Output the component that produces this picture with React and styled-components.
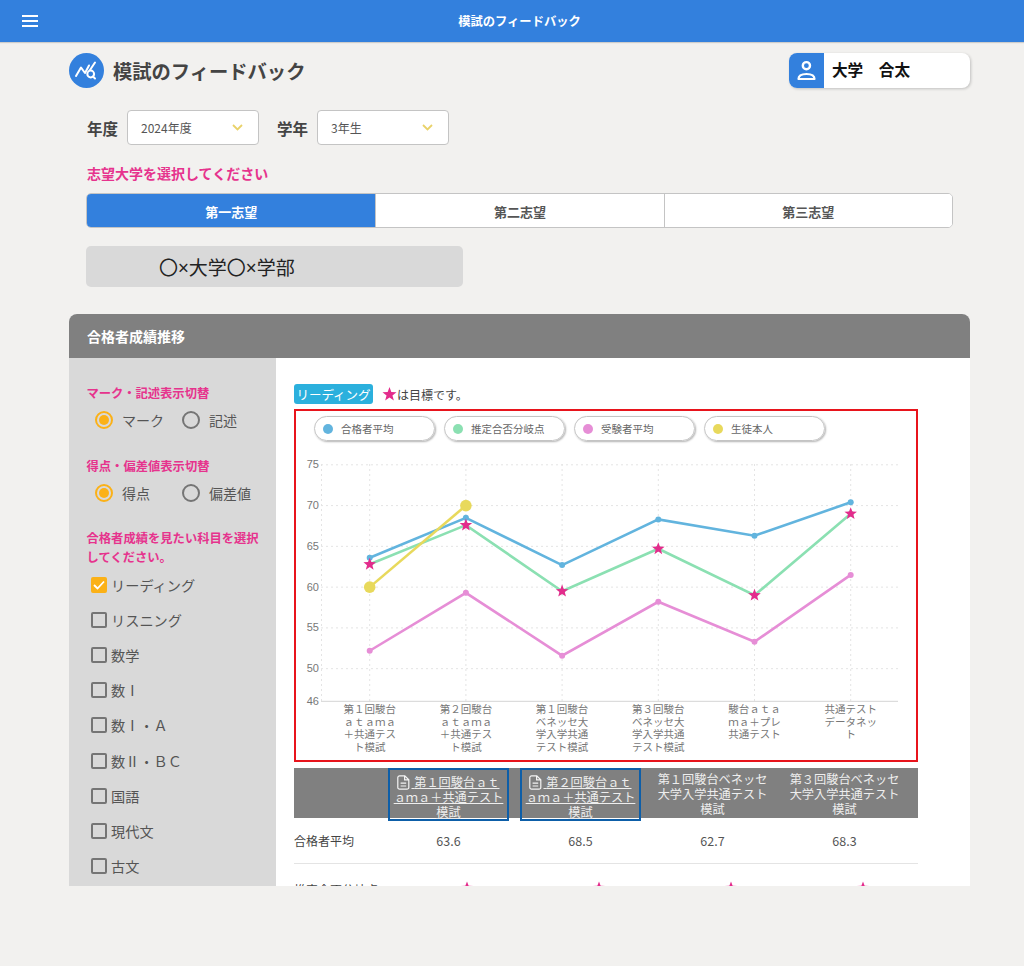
import React from 'react'
import styled, { createGlobalStyle } from 'styled-components'

const subjects = ['リスニング', '数学', '数Ⅰ', '数Ⅰ・Ａ', '数Ⅱ・ＢＣ', '国語', '現代文', '古文']

const legend = [
  { label: '合格者平均', color: '#62b4de' },
  { label: '推定合否分岐点', color: '#8be0b2' },
  { label: '受験者平均', color: '#e68ed6' },
  { label: '生徒本人', color: '#e8d95c' },
]

const blue = [63.6, 68.5, 62.7, 68.3, 66.3, 70.4]
const green = [62.8, 67.6, 59.5, 64.7, 59.0, 69.0]
const pink = [52.2, 59.3, 51.6, 58.2, 53.3, 61.5]
const student = [60, 70]

const xLabels = [
  ['第１回駿台', 'ａｔａｍａ', '＋共通テス', 'ト模試'],
  ['第２回駿台', 'ａｔａｍａ', '＋共通テス', 'ト模試'],
  ['第１回駿台', 'ベネッセ大', '学入学共通', 'テスト模試'],
  ['第３回駿台', 'ベネッセ大', '学入学共通', 'テスト模試'],
  ['駿台ａｔａ', 'ｍａ＋プレ', '共通テスト'],
  ['共通テスト', 'データネッ', 'ト'],
]

const columns = [
  { title: '第１回駿台ａｔａｍａ＋共通テスト模試', link: true, avg: '63.6', line: '62.9' },
  { title: '第２回駿台ａｔａｍａ＋共通テスト模試', link: true, avg: '68.5', line: '67.7' },
  { title: '第１回駿台ベネッセ大学入学共通テスト模試', avg: '62.7', line: '59.6' },
  { title: '第３回駿台ベネッセ大学入学共通テスト模試', avg: '68.3', line: '64.9' },
]

const px = (i) => 369.7 + i * 96.2
const py = (v) => 701.3 - (v - 46) * 8.155

const starPath = (cx, cy, r) => {
  let d = ''
  for (let i = 0; i < 10; i++) {
    const rad = i % 2 === 0 ? r : r * 0.42
    const a = (Math.PI / 5) * i - Math.PI / 2
    d += `${i === 0 ? 'M' : 'L'}${(cx + rad * Math.cos(a)).toFixed(2)} ${(cy + rad * Math.sin(a)).toFixed(2)}`
  }
  return d + 'Z'
}

const GlobalStyle = createGlobalStyle`
  html, body {
    margin: 0;
    padding: 0;
    background: #f2f1ef;
  }
  body {
    font-family: "Noto Sans CJK JP", "Noto Sans", sans-serif;
    color: #444;
  }
  * {
    box-sizing: border-box;
  }
`

const AppBar = styled.header`
  height: 42px;
  padding-left: 15px;
  background: #3380dd;
  box-shadow: 0 1px 1px rgba(0, 0, 0, 0.15);
  display: flex;
  align-items: center;
  justify-content: center;
  position: relative;
  color: #fff;
  font-size: 12.3px;
  font-weight: 700;
`

const MenuButton = styled.span`
  position: absolute;
  left: 22px;
  top: 15px;
  width: 16px;
  height: 12px;
  display: flex;
  flex-direction: column;
  justify-content: space-between;
  i {
    display: block;
    height: 2px;
    background: #fff;
  }
`

const Page = styled.main`
  height: 924px;
  padding: 11px 54px 0 69px;
`

const TopRow = styled.div`
  display: flex;
  justify-content: space-between;
  height: 35px;
`

const TitleWrap = styled.div`
  display: flex;
  align-items: center;
  gap: 9px;
`

const PageTitle = styled.h1`
  margin: 0;
  font-size: 19.3px;
  font-weight: 700;
  color: #444;
`

const Profile = styled.div`
  width: 181px;
  display: flex;
  background: #fff;
  border-radius: 8px;
  box-shadow: 1px 1px 3px rgba(0, 0, 0, 0.2);
  overflow: hidden;
`

const ProfileIcon = styled.span`
  flex: none;
  width: 35px;
  background: #3380dd;
  display: flex;
`

const ProfileName = styled.span`
  margin: -4px 0 0 8px;
  align-self: center;
  font-size: 15.6px;
  font-weight: 700;
  color: #111;
`

const Indented = styled.div`
  padding-left: 18px;
`

const SelectRow = styled.div`
  display: flex;
  align-items: center;
  margin-top: 22px;
`

const FieldLabel = styled.span`
  font-size: 15.5px;
  font-weight: 700;
  color: #444;
  margin-right: 9px;
  width: 31px;
  white-space: nowrap;
`

const Select = styled.div`
  width: 132px;
  height: 35px;
  margin-right: 18px;
  padding: 0 15px 0 13px;
  display: flex;
  align-items: center;
  justify-content: space-between;
  background: #fff;
  border: 1px solid #c4c4c4;
  border-radius: 4px;
  font-size: 12px;
  color: #555;
`

const Prompt = styled.p`
  margin: 18px 0 0;
  height: 20px;
  line-height: 20px;
  font-size: 14px;
  font-weight: 700;
  color: #e6338d;
`

const Tabs = styled.div`
  width: 867px;
  height: 35px;
  margin: 10px 0 0 -1px;
  display: grid;
  grid-template-columns: repeat(3, 1fr);
  background: #fff;
  border: 1px solid #c4c4c4;
  border-radius: 5px;
  overflow: hidden;
`

const Tab = styled.div`
  padding-top: 2px;
  display: flex;
  align-items: center;
  justify-content: center;
  font-size: 13px;
  font-weight: 700;
  color: ${(p) => (p.$active ? '#fff' : '#555')};
  background: ${(p) => (p.$active ? '#3380dd' : '#fff')};
  & + & {
    border-left: 1px solid #c4c4c4;
  }
`

const University = styled.div`
  width: 377px;
  height: 41px;
  margin: 18px 0 0 -1px;
  padding-left: 73px;
  display: flex;
  align-items: center;
  background: #d9d9d9;
  border-radius: 5px;
  font-family: "Noto Sans", "Noto Sans CJK JP", sans-serif;
  font-size: 19px;
  color: #222;
`

const Card = styled.section`
  margin-top: 27px;
  height: 572px;
  display: flex;
  flex-direction: column;
  border-radius: 8px 8px 0 0;
  overflow: hidden;
  background: #fff;
`

const CardHeader = styled.h2`
  flex: none;
  margin: 0;
  height: 44px;
  padding-left: 18px;
  display: flex;
  align-items: center;
  background: #808080;
  color: #fff;
  font-size: 14px;
  font-weight: 700;
`

const CardBody = styled.div`
  flex: 1;
  min-height: 0;
  display: flex;
`

const Sidebar = styled.aside`
  flex: none;
  width: 207px;
  padding: 26px 10px 0 17.5px;
  background: #d9d9d9;
`

const SideLabel = styled.p`
  margin: ${(p) => p.$top || 0}px 0 0;
  font-size: 12.3px;
  line-height: 19px;
  font-weight: 700;
  color: #e6338d;
`

const RadioRow = styled.div`
  display: flex;
  align-items: center;
  height: 18px;
  margin: 8px 0 0 8.5px;
`

const RadioItem = styled.label`
  display: flex;
  align-items: center;
  width: ${(p) => p.$width}px;
  gap: 9px;
  font-size: 14px;
  color: #555;
`

const Radio = styled.span`
  flex: none;
  width: 18px;
  height: 18px;
  border-radius: 50%;
  border: 2px solid ${(p) => (p.$on ? '#fbb117' : '#757575')};
  display: flex;
  align-items: center;
  justify-content: center;
  &::after {
    content: '';
    width: 10px;
    height: 10px;
    border-radius: 50%;
    background: ${(p) => (p.$on ? '#fbb117' : 'transparent')};
  }
`

const SubjectList = styled.div`
  margin: 0 0 0 4.5px;
`

const Subject = styled.label`
  height: 35.2px;
  display: flex;
  align-items: center;
  gap: 4px;
  font-size: 14.2px;
  color: #555;
`

const CheckBox = styled.span`
  flex: none;
  width: 16px;
  height: 16px;
  border-radius: 2px;
  border: 2px solid ${(p) => (p.$on ? '#fbb117' : '#757575')};
  background: ${(p) => (p.$on ? '#fbb117' : 'transparent')};
  display: flex;
  align-items: center;
  justify-content: center;
`

const Main = styled.div`
  flex: 1;
  min-width: 0;
  padding: 26px 52px 0 18px;
`

const TagRow = styled.div`
  height: 20px;
  display: flex;
  align-items: center;
  font-size: 12px;
  color: #444;
`

const Tag = styled.span`
  width: 79px;
  height: 20px;
  margin-right: 9px;
  display: flex;
  align-items: center;
  justify-content: center;
  border-radius: 3px;
  background: #2bb0dd;
  color: #fff;
  font-size: 12.5px;
`

const ChartBox = styled.div`
  height: 353px;
  margin-top: 5px;
  border: 2px solid #e8141c;
  overflow: hidden;
`

const Legend = styled.div`
  display: flex;
  gap: 9px;
  padding: 5px 0 0 18px;
`

const LegendPill = styled.div`
  width: 121px;
  height: 25px;
  padding-left: 8px;
  display: flex;
  align-items: center;
  gap: 8px;
  border: 1px solid #c4c4c4;
  border-radius: 13px;
  box-shadow: 1px 1px 2px rgba(0, 0, 0, 0.3);
  font-size: 10.5px;
  color: #666;
`

const LegendDot = styled.span`
  width: 10px;
  height: 10px;
  border-radius: 50%;
  background: ${(p) => p.$color};
`

const ChartSvg = styled.svg`
  display: block;
  margin-top: 8px;
`

const Table = styled.div`
  margin-top: 6px;
`

const TableRow = styled.div`
  display: grid;
  grid-template-columns: 88.5px repeat(4, 132px) 1fr;
  align-items: center;
  height: ${(p) => p.$height}px;
  background: ${(p) => p.$bg || 'transparent'};
  border-bottom: ${(p) => (p.$line ? '1px solid #e4e4e4' : 'none')};
`

const HeadCell = styled.div`
  margin: 0 ${(p) => (p.$link ? 5.5 : 0)}px;
  height: ${(p) => (p.$link ? 53 : 50)}px;
  padding: ${(p) => (p.$link ? '4.5px 3px 0' : '2.5px 9px 0')};
  text-align: center;
  font-size: 12.2px;
  line-height: 15px;
  color: #eee;
  border: ${(p) => (p.$link ? '2px solid #0d5ea8' : 'none')};
  text-decoration: ${(p) => (p.$link ? 'underline' : 'none')};
  svg {
    vertical-align: -3px;
    margin-right: 1px;
  }
`

const RowLabel = styled.div`
  font-size: 12px;
  color: #444;
  white-space: nowrap;
`

const ValueCell = styled.div`
  font-size: 12.5px;
  color: #555;
  text-align: center;
  position: relative;
  padding-right: ${(p) => (p.$starred ? 26 : 0)}px;
`

const TableStar = styled.svg`
  position: absolute;
  left: 77px;
  top: 1px;
`

const Hamburger = () => (
  <MenuButton>
    <i />
    <i />
    <i />
  </MenuButton>
)

const TitleIcon = () => (
  <svg width="35" height="35" viewBox="0 0 35 35">
    <circle cx="17.5" cy="17.5" r="17.5" fill="#3380dd" />
    <path
      d="M7 23l5-8.5 4 5.5 4-7.5M21 17l5-7.5"
      fill="none"
      stroke="#fff"
      strokeWidth="2"
      strokeLinecap="round"
      strokeLinejoin="round"
    />
    <circle cx="21.7" cy="21" r="3.4" fill="none" stroke="#fff" strokeWidth="2" />
    <path d="M24 23.5l2 2" stroke="#fff" strokeWidth="2" strokeLinecap="round" />
  </svg>
)

const PersonIcon = () => (
  <svg width="35" height="35" viewBox="0 0 35 35">
    <circle cx="17.4" cy="12.7" r="3.6" fill="none" stroke="#fff" strokeWidth="2.4" />
    <path
      d="M9.5 26c0-3.4 3.6-5 8-5s8 1.6 8 5z"
      fill="none"
      stroke="#fff"
      strokeWidth="2.2"
      strokeLinejoin="round"
    />
  </svg>
)

const Chevron = () => (
  <svg width="11" height="7" viewBox="0 0 11 7">
    <path d="M1 1l4.5 4.5L10 1" fill="none" stroke="#e9d26a" strokeWidth="1.8" />
  </svg>
)

const DocIcon = () => (
  <svg width="13" height="15" viewBox="0 0 13 15">
    <path
      d="M2.6.8h5.2l4 4v7.6a1.8 1.8 0 0 1-1.8 1.8H2.6A1.8 1.8 0 0 1 .8 12.4V2.6A1.8 1.8 0 0 1 2.6.8zM7.6.9v4h4.1M3.6 8.2h5.6M3.6 11h5.6"
      fill="none"
      stroke="#f4f4f4"
      strokeWidth="1.2"
    />
  </svg>
)

const Line = ({ values, color }) => (
  <g>
    <polyline
      points={values.map((v, i) => `${px(i)},${py(v)}`).join(' ')}
      fill="none"
      stroke={color}
      strokeWidth="2.6"
    />
    {values.map((v, i) => (
      <circle key={i} cx={px(i)} cy={py(v)} r="3" fill={color} />
    ))}
  </g>
)

const Chart = () => (
  <ChartSvg width="620" height="307" viewBox="296 449 620 307">
    <g stroke="#e4e4e4" strokeWidth="1" strokeDasharray="2 3">
      {[75, 70, 65, 60, 55, 50].map((v) => (
        <line key={v} x1="321" x2="898" y1={py(v)} y2={py(v)} />
      ))}
      {[0, 1, 2, 3, 4, 5].map((i) => (
        <line key={i} x1={px(i)} x2={px(i)} y1="464" y2="701" />
      ))}
      <line x1="321.5" x2="321.5" y1="464" y2="701" />
    </g>
    <line x1="321" x2="898" y1="701.3" y2="701.3" stroke="#d4d4d4" />
    <g fontFamily="Liberation Sans, sans-serif" fontSize="11" fill="#777" textAnchor="end">
      {[75, 70, 65, 60, 55, 50, 46].map((v) => (
        <text key={v} x="319" y={py(v) + 3.5}>
          {v}
        </text>
      ))}
    </g>
    <g fontSize="10.5" fill="#777" textAnchor="middle">
      {xLabels.map((lines, i) =>
        lines.map((t, j) => (
          <text key={j} x={px(i)} y={713 + j * 12.7}>
            {t}
          </text>
        ))
      )}
    </g>
    <Line values={pink} color="#e68ed6" />
    <Line values={green} color="#8be0b2" />
    <Line values={blue} color="#62b4de" />
    <polyline
      points={student.map((v, i) => `${px(i)},${py(v)}`).join(' ')}
      fill="none"
      stroke="#e8d95c"
      strokeWidth="2.6"
    />
    {student.map((v, i) => (
      <circle key={i} cx={px(i)} cy={py(v)} r="5.8" fill="#e8d95c" />
    ))}
    {green.map((v, i) => (
      <path key={i} d={starPath(px(i), py(v), 6.6)} fill="#e32c8c" />
    ))}
  </ChartSvg>
)

export default function App() {
  return (
    <>
      <GlobalStyle />
      <AppBar>
        <Hamburger />
        模試のフィードバック
      </AppBar>
      <Page>
        <TopRow>
          <TitleWrap>
            <TitleIcon />
            <PageTitle>模試のフィードバック</PageTitle>
          </TitleWrap>
          <Profile>
            <ProfileIcon>
              <PersonIcon />
            </ProfileIcon>
            <ProfileName>大学　合太</ProfileName>
          </Profile>
        </TopRow>
        <Indented>
          <SelectRow>
            <FieldLabel>年度</FieldLabel>
            <Select>
              2024年度
              <Chevron />
            </Select>
            <FieldLabel>学年</FieldLabel>
            <Select>
              3年生
              <Chevron />
            </Select>
          </SelectRow>
          <Prompt>志望大学を選択してください</Prompt>
          <Tabs>
            <Tab $active>第一志望</Tab>
            <Tab>第二志望</Tab>
            <Tab>第三志望</Tab>
          </Tabs>
          <University>〇×大学〇×学部</University>
        </Indented>
        <Card>
          <CardHeader>合格者成績推移</CardHeader>
          <CardBody>
            <Sidebar>
              <SideLabel>マーク・記述表示切替</SideLabel>
              <RadioRow>
                <RadioItem $width={87}>
                  <Radio $on />
                  マーク
                </RadioItem>
                <RadioItem $width={70}>
                  <Radio />
                  記述
                </RadioItem>
              </RadioRow>
              <SideLabel $top={28}>得点・偏差値表示切替</SideLabel>
              <RadioRow>
                <RadioItem $width={87}>
                  <Radio $on />
                  得点
                </RadioItem>
                <RadioItem $width={80}>
                  <Radio />
                  偏差値
                </RadioItem>
              </RadioRow>
              <SideLabel $top={27}>合格者成績を見たい科目を選択してください。</SideLabel>
              <SubjectList>
                <Subject>
                  <CheckBox $on>
                    <svg width="12" height="10" viewBox="0 0 12 10">
                      <path d="M1 5l3.5 3.5L11 1.5" fill="none" stroke="#fff" strokeWidth="1.8" />
                    </svg>
                  </CheckBox>
                  リーディング
                </Subject>
                {subjects.map((s) => (
                  <Subject key={s}>
                    <CheckBox />
                    {s}
                  </Subject>
                ))}
              </SubjectList>
            </Sidebar>
            <Main>
              <TagRow>
                <Tag>リーディング</Tag>
                <svg width="15" height="16" viewBox="0 0 15 16">
                  <path d={starPath(7.5, 8.5, 7.4)} fill="#e32c8c" />
                </svg>
                は目標です。
              </TagRow>
              <ChartBox>
                <Legend>
                  {legend.map((l) => (
                    <LegendPill key={l.label}>
                      <LegendDot $color={l.color} />
                      {l.label}
                    </LegendPill>
                  ))}
                </Legend>
                <Chart />
              </ChartBox>
              <Table>
                <TableRow $height={50} $bg="#808080">
                  <div />
                  {columns.map((c) => (
                    <HeadCell key={c.title} $link={c.link}>
                      {c.link && (
                        <>
                          <DocIcon />{' '}
                        </>
                      )}
                      {c.title}
                    </HeadCell>
                  ))}
                </TableRow>
                <TableRow $height={46} $line>
                  <RowLabel>合格者平均</RowLabel>
                  {columns.map((c) => (
                    <ValueCell key={c.title}>{c.avg}</ValueCell>
                  ))}
                </TableRow>
                <TableRow $height={50}>
                  <RowLabel>推定合否分岐点</RowLabel>
                  {columns.map((c) => (
                    <ValueCell key={c.title} $starred>
                      {c.line}
                      <TableStar width="14" height="14" viewBox="0 0 14 14">
                        <path d={starPath(7, 7, 6.6)} fill="#e32c8c" />
                      </TableStar>
                    </ValueCell>
                  ))}
                </TableRow>
              </Table>
            </Main>
          </CardBody>
        </Card>
      </Page>
    </>
  )
}
